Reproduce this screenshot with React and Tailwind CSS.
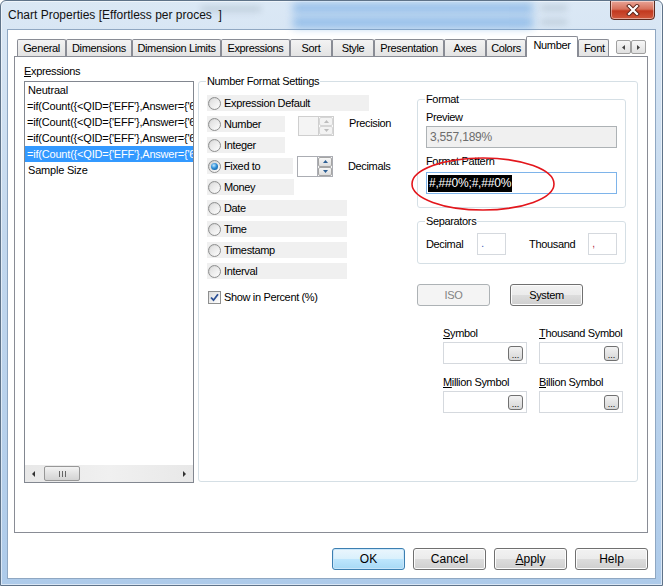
import React from "react";

const FONT = "font-['Liberation_Sans',Arial,sans-serif]";

function Radio({ checked }) {
  return (
    <span className="flex h-[13px] w-[13px] shrink-0 items-center justify-center rounded-full border border-[#8e8f8f] bg-[linear-gradient(135deg,#cdcdcd,#ffffff)]">
      {checked ? (
        <span className="h-[7px] w-[7px] rounded-full bg-[radial-gradient(circle_at_40%_35%,#c5e9ff_0%,#2f8fd8_45%,#0b4a86_100%)]" />
      ) : (
        <span className="h-[9px] w-[9px] rounded-full bg-[linear-gradient(135deg,#dedede,#fbfbfb)]" />
      )}
    </span>
  );
}

function RadioChip({ label, w, checked }) {
  return (
    <div className={`flex h-[16px] shrink-0 items-center bg-[#f0f0f0] pl-[1px] ${w}`}>
      <Radio checked={checked} />
      <span className="ml-[3px] whitespace-nowrap leading-[16px]">{label}</span>
    </div>
  );
}

function SpinBtn({ up, disabled }) {
  const fill = disabled ? "#bdbdbd" : "#2c5f94";
  return (
    <div
      className={`flex flex-1 items-center justify-center rounded-[2px] border ${
        disabled ? "border-[#d6d6d6] bg-[#f3f3f3]" : "border-[#a5a5a5] bg-[linear-gradient(#f7f7f7,#dcdcdc)]"
      }`}
    >
      <svg width="5" height="3" viewBox="0 0 5 3">
        {up ? <path d="M0 3 L2.5 0 L5 3Z" fill={fill} /> : <path d="M0 0 L2.5 3 L5 0Z" fill={fill} />}
      </svg>
    </div>
  );
}

function Spinner({ disabled, extra }) {
  return (
    <div className={`flex h-[20px] w-[36px] shrink-0 ${extra}`}>
      <div className={`h-full flex-1 border ${disabled ? "border-[#cfcfcf] bg-[#f4f4f4]" : "border-[#abadb3] bg-white"}`} />
      <div className={`flex w-[15px] flex-col border-y border-r ${disabled ? "border-[#cfcfcf]" : "border-[#abadb3]"}`}>
        <SpinBtn up disabled={disabled} />
        <SpinBtn disabled={disabled} />
      </div>
    </div>
  );
}

function GroupBox({ label, className, children }) {
  return (
    <div className={`relative rounded-[3px] border border-[#d5dfe5] ${className}`}>
      <span className="absolute left-[7px] top-[-7px] whitespace-nowrap bg-white px-[1px] leading-[13px]">{label}</span>
      {children}
    </div>
  );
}

function WinButton({ children, disabled, isDefault, w = "w-[73px]" }) {
  return (
    <div
      className={`flex h-[22px] ${w} items-center justify-center rounded-[3px] border ${
        disabled
          ? "border-[#adb2b5] bg-[#f4f4f4] text-[#838383]"
          : isDefault
          ? "border-[#3c7fb1] bg-[linear-gradient(#eaf6fd_0%,#d9f0fc_50%,#bee6fd_50%,#a7d9f5_100%)] shadow-[inset_0_0_0_1px_#c9e6fa] text-black"
          : "border-[#707070] bg-[linear-gradient(#f2f2f2_0%,#ebebeb_50%,#dddddd_50%,#cfcfcf_100%)] shadow-[inset_0_0_0_1px_#fcfcfc] text-black"
      }`}
    >
      {children}
    </div>
  );
}

function SymbolField({ underline, rest, w }) {
  return (
    <div className={`flex flex-col ${w}`}>
      <span className="h-[12px] whitespace-nowrap leading-[12px]">
        <span className="underline">{underline}</span>
        {rest}
      </span>
      <div className="mt-[3px] flex h-[22px] items-center justify-end border border-[#d5d9de] bg-white pr-[3px]">
        <div className="flex h-[15px] w-[15px] items-end justify-center rounded-[3px] border border-[#707070] bg-[linear-gradient(#f2f2f2,#d6d6d6)] text-[9px] leading-[10px] tracking-normal">
          ...
        </div>
      </div>
    </div>
  );
}

export default function App() {
  const tabs = [
    ["General", "w-[49px]"],
    ["Dimensions", "w-[66px]"],
    ["Dimension Limits", "w-[89px]"],
    ["Expressions", "w-[69px]"],
    ["Sort", "w-[42px]"],
    ["Style", "w-[42px]"],
    ["Presentation", "w-[70px]"],
    ["Axes", "w-[42px]"],
    ["Colors", "w-[40px]"],
  ];
  const tabCls =
    "flex h-[17px] shrink-0 items-center justify-center rounded-t-[2px] border border-b-0 border-[#898c95] bg-[linear-gradient(#f3f3f3,#e3e3e3)] leading-[15px] whitespace-nowrap";

  const formula = "=if(Count({<QID={'EFF'},Answer={'6'}>}Respondent)";

  return (
    <div
      className={`relative h-[586px] w-[663px] overflow-hidden rounded-t-[6px] border border-[#5f7389] bg-[linear-gradient(#dbe8f5,#c3d8ee_40%,#aecbea)] shadow-[inset_0_0_0_1px_rgba(255,255,255,0.55)] text-[11px] tracking-[-0.35px] text-black ${FONT}`}
    >
      {/* Title bar */}
      <div className="relative h-[28px]">
        <div className="absolute left-[200px] top-[5px] h-[6px] w-[60px] bg-[#8a9aa8] opacity-30 blur-[3px]" />
        <div className="absolute left-[292px] top-[2px] h-[10px] w-[240px] bg-[#5a9ce0] opacity-55 blur-[4px]" />
        <div className="absolute left-[292px] top-[16px] h-[11px] w-[240px] bg-[#5a9ce0] opacity-55 blur-[4px]" />
        <div className="absolute left-[540px] top-[4px] h-[6px] w-[26px] bg-[#8a9aa8] opacity-30 blur-[3px]" />
        <div className="absolute left-[540px] top-[18px] h-[6px] w-[26px] bg-[#8a9aa8] opacity-30 blur-[3px]" />
        <span className="absolute left-[7px] top-[7px] text-[12px] leading-[14px] tracking-normal text-[#111]">
          Chart Properties [Effortless per proces&nbsp; ]
        </span>
        {/* close button */}
        <div className="absolute left-[609px] top-[-1px] flex h-[20px] w-[45px] items-center justify-center rounded-b-[4px] border border-[#5b2a1f] bg-[linear-gradient(#e8a496_0%,#d7715b_45%,#c2391f_55%,#d0583c_100%)] shadow-[inset_0_0_0_1px_rgba(255,255,255,0.45)]">
          <svg width="14" height="12" viewBox="0 0 14 12">
            <path d="M3 2 L11 10 M11 2 L3 10" stroke="#5a2218" strokeWidth="4" strokeLinecap="square" />
            <path d="M3 2 L11 10 M11 2 L3 10" stroke="#ffffff" strokeWidth="2.2" strokeLinecap="square" />
          </svg>
        </div>
      </div>

      {/* Client area */}
      <div className="mx-[6px] flex h-[550px] flex-col border border-[#8fa7c2] bg-white pl-[6px] pt-[6px]">
        {/* tab strip */}
        <div className="flex h-[20px] items-end pl-[3px]">
          {tabs.map(([t, w]) => (
            <div key={t} className={`${tabCls} ${w}`}>
              {t}
            </div>
          ))}
          <div className="relative z-10 -mb-px flex h-[21px] w-[52px] shrink-0 items-start justify-center rounded-t-[2px] border border-b-0 border-[#898c95] bg-white pt-[2px] leading-[13px]">
            Number
          </div>
          <div className={`${tabCls} w-[31px] justify-start pl-[5px]`}>Font</div>
          <div className="mb-[2px] ml-[7px] flex h-[14px] self-end">
            <div className="flex w-[15px] items-center justify-center rounded-[2px] border border-[#a0a0a0] bg-[linear-gradient(#f7f7f7,#e0e0e0)]">
              <svg width="3" height="5" viewBox="0 0 3 5">
                <path d="M3 0 L0 2.5 L3 5Z" fill="#444" />
              </svg>
            </div>
            <div className="flex w-[15px] items-center justify-center rounded-[2px] border border-[#a0a0a0] bg-[linear-gradient(#f7f7f7,#e0e0e0)]">
              <svg width="3" height="5" viewBox="0 0 3 5">
                <path d="M0 0 L3 2.5 L0 5Z" fill="#444" />
              </svg>
            </div>
          </div>
        </div>

        {/* tab page */}
        <div className="flex h-[477px] w-[634px] border border-[#898c95] bg-white pl-[9px] pt-[8px]">
          {/* left column */}
          <div className="flex w-[170px] flex-col">
            <span className="h-[13px] leading-[13px]">
              <span className="underline">E</span>xpressions
            </span>
            <div className="mt-[3px] flex h-[402px] flex-col border border-[#828790] bg-white">
              <div className="flex flex-1 flex-col overflow-hidden tracking-[-0.2px]">
                <div className="h-[16px] whitespace-nowrap pl-[3px] leading-[16px]">Neutraal</div>
                <div className="h-[16px] whitespace-nowrap pl-[2px] leading-[16px]">{formula}</div>
                <div className="h-[16px] whitespace-nowrap pl-[2px] leading-[16px]">{formula}</div>
                <div className="h-[16px] whitespace-nowrap pl-[2px] leading-[16px]">{formula}</div>
                <div className="h-[16px] whitespace-nowrap bg-[#3399ff] pl-[2px] leading-[16px] text-white">{formula}</div>
                <div className="h-[16px] whitespace-nowrap pl-[3px] leading-[16px]">Sample Size</div>
              </div>
              {/* horizontal scrollbar */}
              <div className="flex h-[17px] items-center bg-[linear-gradient(90deg,#e8e8e8,#f0f0f0,#e8e8e8)]">
                <div className="flex w-[17px] items-center justify-center">
                  <svg width="3" height="6" viewBox="0 0 3 6">
                    <path d="M3 0 L0 3 L3 6Z" fill="#333" />
                  </svg>
                </div>
                <div className="ml-[2px] flex h-[15px] w-[36px] items-center justify-center rounded-[2px] border border-[#979797] bg-[linear-gradient(#f3f3f3,#e2e2e2_50%,#d3d3d3)]">
                  <svg width="7" height="6" viewBox="0 0 7 6">
                    <path d="M0.5 0 V6 M3.5 0 V6 M6.5 0 V6" stroke="#666" strokeWidth="1" />
                  </svg>
                </div>
                <div className="flex-1" />
                <div className="flex w-[17px] items-center justify-center">
                  <svg width="3" height="6" viewBox="0 0 3 6">
                    <path d="M0 0 L3 3 L0 6Z" fill="#333" />
                  </svg>
                </div>
              </div>
            </div>
          </div>

          {/* Number Format Settings group */}
          <GroupBox label="Number Format Settings" className="ml-[4px] mt-[16px] flex h-[401px] w-[440px]">
            {/* left radios */}
            <div className="flex w-[218px] flex-col gap-[5px] pl-[8px] pt-[13px]">
              <RadioChip label="Expression Default" w="w-[162px]" />
              <div className="flex h-[16px] items-start">
                <RadioChip label="Number" w="w-[78px]" />
                <Spinner disabled extra="ml-[13px]" />
                <span className="ml-[15px] leading-[14px]">Precision</span>
              </div>
              <RadioChip label="Integer" w="w-[78px]" />
              <div className="flex h-[16px] items-start">
                <RadioChip label="Fixed to" w="w-[86px]" checked />
                <Spinner extra="ml-[4px] -mt-[2px] h-[21px]" />
                <span className="ml-[15px] leading-[16px]">Decimals</span>
              </div>
              <RadioChip label="Money" w="w-[87px]" />
              <RadioChip label="Date" w="w-[140px]" />
              <RadioChip label="Time" w="w-[140px]" />
              <RadioChip label="Timestamp" w="w-[140px]" />
              <RadioChip label="Interval" w="w-[140px]" />
              <div className="mt-[6px] flex h-[14px] items-center pl-[1px]">
                <span className="flex h-[13px] w-[13px] items-center justify-center border border-[#8e8f8f] bg-[linear-gradient(135deg,#dcdcdc,#ffffff)]">
                  <svg width="9" height="9" viewBox="0 0 9 9">
                    <path d="M1 4.5 L3.5 7.2 L8 1.2" fill="none" stroke="#2b4f94" strokeWidth="1.8" />
                  </svg>
                </span>
                <span className="ml-[3px] leading-[14px]">Show in Percent (%)</span>
              </div>
            </div>

            {/* right column */}
            <div className="flex w-[209px] flex-col pt-[17px]">
              <GroupBox label="Format" className="h-[109px] px-[8px] pt-[11px]">
                <div className="h-[13px] leading-[13px]">Preview</div>
                <div className="mt-[2px] flex h-[22px] items-center border border-[#adb2b5] bg-[#f0f0f0] pl-[3px] text-[12px] tracking-[-0.2px] text-[#6d6d6d]">
                  3,557,189%
                </div>
                <div className="mt-[7px] h-[13px] leading-[13px]">Format Pattern</div>
                <div className="mt-[4px] flex h-[22px] items-center border border-[#7eb4ea] bg-white pl-[1px]">
                  <span className="bg-black px-[1px] text-[12px] leading-[17px] tracking-[-0.2px] text-white">#,##0%;#,##0%</span>
                </div>
              </GroupBox>

              <GroupBox label="Separators" className="mt-[13px] flex h-[43px] items-start px-[8px] pt-[11px]">
                <span className="leading-[22px]">Decimal</span>
                <div className="ml-[14px] flex h-[22px] w-[30px] items-center border border-[#d5d9de] bg-white pl-[3px] text-[10px] leading-[10px] text-[#2a4fb0]">
                  .
                </div>
                <span className="ml-[23px] leading-[22px]">Thousand</span>
                <div className="ml-[13px] flex h-[22px] w-[30px] items-center border border-[#d5d9de] bg-white pl-[3px] text-[10px] leading-[10px] text-[#b01a3a]">
                  ,
                </div>
              </GroupBox>

              <div className="mt-[20px] flex">
                <WinButton disabled>ISO</WinButton>
                <div className="ml-[20px]">
                  <WinButton>System</WinButton>
                </div>
              </div>

              <div className="ml-[26px] mt-[21px] flex">
                <SymbolField underline="S" rest="ymbol" w="w-[84px]" />
                <div className="ml-[12px]">
                  <SymbolField underline="T" rest="housand Symbol" w="w-[84px]" />
                </div>
              </div>
              <div className="ml-[26px] mt-[12px] flex">
                <SymbolField underline="M" rest="illion Symbol" w="w-[84px]" />
                <div className="ml-[12px]">
                  <SymbolField underline="B" rest="illion Symbol" w="w-[84px]" />
                </div>
              </div>
            </div>
          </GroupBox>
        </div>

        {/* bottom buttons */}
        <div className="mt-[15px] flex gap-[8px] pl-[318px] text-[12px] tracking-normal">
          <WinButton isDefault>OK</WinButton>
          <WinButton>Cancel</WinButton>
          <WinButton>
            <span>
              <span className="underline">A</span>pply
            </span>
          </WinButton>
          <WinButton>Help</WinButton>
        </div>
      </div>

      {/* red annotation ellipse */}
      <svg className="absolute left-[409px] top-[155px]" width="146" height="56" viewBox="0 0 146 56">
        <ellipse cx="73" cy="28" rx="71" ry="26" fill="none" stroke="#e3161c" strokeWidth="1.6" />
      </svg>
    </div>
  );
}
